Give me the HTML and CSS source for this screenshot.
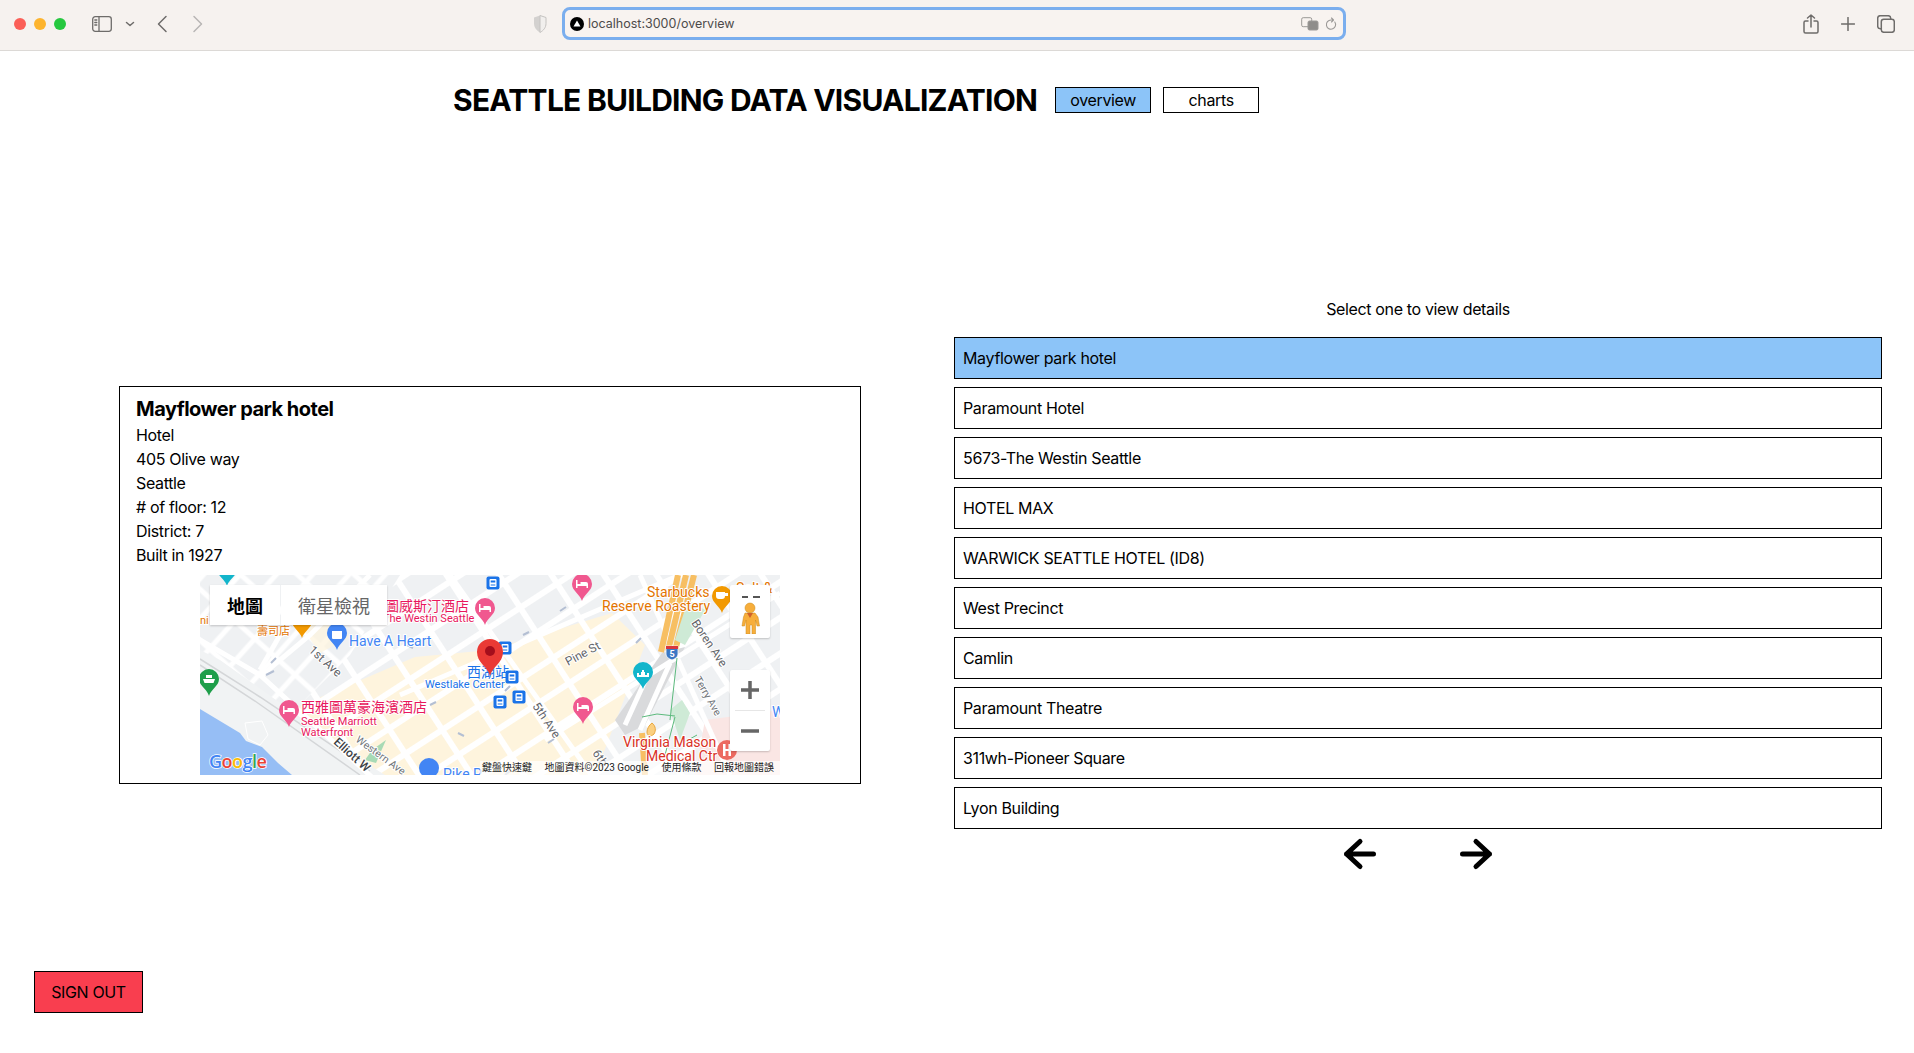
FILE: index.html
```html
<!DOCTYPE html>
<html lang="en">
  <head>
    <meta charset="UTF-8" />
    <title>Seattle Building Data Visualization</title>
    <meta name="viewport" content="width=device-width, initial-scale=1.0" />
    <link rel="stylesheet" href="styles.css">
  </head>
  <body>
    <div class="toolbar">
      <div class="lights">
        <span class="light light-red"></span>
        <span class="light light-yellow"></span>
        <span class="light light-green"></span>
      </div>
      <svg class="icon sidebar-icon" viewBox="0 0 20 16">
        <rect x="0.7" y="0.7" width="18.6" height="14.6" rx="2.5" />
        <path d="M7 1v14M2.8 4h2M2.8 6.5h2M2.8 9h2" />
      </svg>
      <svg class="icon chevron-icon" viewBox="0 0 10 6"><path d="M1.5 1.5 5 4.5l3.5-3" /></svg>
      <svg class="icon back-icon" viewBox="0 0 12 18"><path d="M10 1.5 2.5 9l7.5 7.5" /></svg>
      <svg class="icon forward-icon" viewBox="0 0 12 18"><path d="M2 1.5 9.5 9 2 16.500" /></svg>
      <svg class="shield-icon" viewBox="0 0 14 18">
        <path class="shield-left" d="M7 0.5 1 2.500v6c0 4 2.500 7 6 9z" />
        <path class="shield-right" d="M7 0.5l6 2v6c0 4-2.500 7-6 9z" />
      </svg>
      <div class="address-bar">
        <svg class="site-icon" viewBox="0 0 14 14">
          <circle cx="7" cy="7" r="7" />
          <path d="M7 3.500 10.500 9.500h-7z" />
        </svg>
        <span class="address-text">localhost:3000/overview</span>
        <svg class="translate-icon" viewBox="0 0 18 14">
          <rect x="0.7" y="0.7" width="10" height="9" rx="1.500" />
          <rect class="translate-fill" x="7" y="4" width="10" height="9" rx="1.500" />
        </svg>
        <svg class="icon reload-icon" viewBox="0 0 12 14"><path d="M9.800 5A4.600 4.600 0 1 1 6 3h2M6.500 1 8.500 3 6.500 5" /></svg>
      </div>
      <div class="toolbar-right">
        <svg class="icon share-icon" viewBox="0 0 16 20"><path d="M5 7H2.500A1.500 1.500 0 0 0 1 8.500v9A1.500 1.500 0 0 0 2.500 19h11a1.500 1.500 0 0 0 1.500-1.500v-9A1.500 1.500 0 0 0 13.500 7H11M8 13V1M4.500 4 8 1l3.500 3" /></svg>
        <svg class="icon plus-icon" viewBox="0 0 14 14"><path d="M7 0.500v13M0.500 7h13" /></svg>
        <svg class="icon tabs-icon" viewBox="0 0 18 18">
          <rect x="0.700" y="0.700" width="13" height="13" rx="2.500" />
          <rect class="tabs-front" x="4.300" y="4.300" width="13" height="13" rx="2.500" />
        </svg>
      </div>
    </div>

    <header class="site-header">
      <h1>SEATTLE BUILDING DATA VISUALIZATION</h1>
      <button class="nav-button nav-active">overview</button>
      <button class="nav-button">charts</button>
    </header>

    <main class="overview">
      <section class="detail-panel">
        <div class="detail-card">
          <h2>Mayflower park hotel</h2>
          <p>Hotel</p>
          <p>405 Olive way</p>
          <p>Seattle</p>
          <p># of floor: 12</p>
          <p>District: 7</p>
          <p>Built in 1927</p>
          <div class="map">
            <svg class="map-canvas" viewBox="0 0 580 200">
              <defs>
                <pattern id="blocksGray" width="44" height="30" patternUnits="userSpaceOnUse" patternTransform="rotate(-33 290 100)">
                  <rect width="44" height="30" fill="#ffffff" />
                  <rect x="3" y="3" width="38" height="24" fill="#eff1f3" />
                </pattern>
                <pattern id="blocksTan" width="44" height="30" patternUnits="userSpaceOnUse" patternTransform="rotate(-33 290 100)">
                  <rect width="44" height="30" fill="#ffffff" />
                  <rect x="3" y="3" width="38" height="24" fill="#fef4dd" />
                </pattern>
                <pattern id="blocksWest" width="27" height="38" patternUnits="userSpaceOnUse" patternTransform="rotate(42 120 90)">
                  <rect width="27" height="38" fill="#ffffff" />
                  <rect x="2.500" y="2.500" width="22" height="33" fill="#eff1f3" />
                </pattern>
                <path id="pin" d="M0 0C-2-7-10-10-10-17A10 10 0 1 1 10-17C10-10 2-7 0 0Z" />
                <path id="bed" d="M-6-13v-8h1.500v4h3v-2h5.500a2 2 0 0 1 2 2v4H4.500v-2h-9v2z" fill="#fff" />
                <g id="stop">
                  <rect x="-6.500" y="-6.500" width="13" height="13" rx="2" fill="#1a73e8" />
                  <rect x="-3.500" y="-4" width="7" height="8" rx="1" fill="#fff" />
                  <rect x="-2.300" y="-2.500" width="4.600" height="2" fill="#1a73e8" />
                  <rect x="-2.300" y="1.500" width="4.600" height="1" fill="#1a73e8" />
                </g>
              </defs>

              <rect width="580" height="200" fill="url(#blocksGray)" />
              <polygon points="0,0 200,0 150,80 95,135 130,200 0,200" fill="url(#blocksWest)" />
              <polygon points="95,133 215,82 290,75 412,38 445,70 395,200 160,200" fill="url(#blocksTan)" />
              <polygon points="86,30 115,18 150,62 120,78" fill="#fef4dd" opacity="0.7" />

              <polygon points="0,75 20,85 150,178 185,200 0,200" fill="#f1f3f4" />
              <path class="rail" d="M0 84 60 122 170 196" />
              <path class="rail" d="M0 90 55 126 160 200" />
              <path class="road-wide" d="M-5 62 60 100 175 205" />
              <path class="road-wide" d="M62 100 110 60 170 0" />
              <path class="road-wide" d="M60 95 80 60" />

              <path class="water" d="M0 134 40 158 46 166 62 172 78 188 92 200H0Z" />
              <path class="shore" d="M45 148 62 146 68 160 60 170 48 164Z" />

              <polygon points="505,145 580,135 580,200 495,200" fill="#fae6e4" />
              <polygon points="462,78 485,72 445,150 425,160 415,145" fill="#d9dadc" />
              <path class="road-wide" d="M450 95 425 150M470 88 440 155" />
              <path class="road-wide" d="M345 165 580 18" />
              <path class="road-wide" d="M200 120 480 0" />
              <path class="road-wide" d="M250 0 395 205" />
              <path class="road-wide" d="M440 0 530 200" />

              <path class="highway" d="M478 0 461 77" />
              <path class="highway" d="M486 0 468 76" />
              <path class="highway" d="M494 0 475 76" />
              <path class="highway" d="M445 200 442 158" />
              <path class="highway-thin" d="M452 148c4 3 4 8 2 11-3 3-7 2-7-2 0-3 2-7 5-9z" />
              <polygon points="488,25 505,35 485,70 475,65" fill="#ceead6" />
              <polygon points="490,138 480,165 470,135 482,125" fill="#ceead6" />
              <polygon points="172,175 186,165 176,188 165,185" fill="#a8dab5" />
              <path class="path-green" d="M477 83 470 145M442 142l15-3 18 2M475 142l-10 38M497 160l-18 10" />

              <path class="arrow" d="M66 100l8-4M71 88l5-5M126 30l5 3M207 70l6 3M143 160l-5 2M230 130l6-3M305 116l5-5M323 60l6-3M360 36l6-4M258 158l6 3M348 168l6-4M305 200l5-4M200 36l-3-6M436 68l5-5" />

              <text class="label label-road" transform="translate(108 76) rotate(42)">1st Ave</text>
              <text class="label label-road" transform="translate(368 91) rotate(-28)">Pine St</text>
              <text class="label label-road" transform="translate(332 131) rotate(56)">5th Ave</text>
              <text class="label label-road" transform="translate(491 48) rotate(56)">Boren Ave</text>
              <text class="label label-road-small" transform="translate(494 104) rotate(60)">Terry Ave</text>
              <text class="label label-road-dark" transform="translate(133 168) rotate(42)">Elliott W</text>
              <text class="label label-road-small" transform="translate(155 166) rotate(36)">Western Ave</text>
              <text class="label label-road" transform="translate(392 178) rotate(56)">6th</text>

              <text class="label label-hotel-cjk" x="185" y="36">圖威斯汀酒店</text>
              <text class="label label-hotel" x="183" y="47">The Westin Seattle</text>
              <text class="label label-hotel-cjk" x="101" y="137">西雅圖萬豪海濱酒店</text>
              <text class="label label-hotel" x="101" y="150">Seattle Marriott</text>
              <text class="label label-hotel" x="101" y="161">Waterfront</text>
              <text class="label label-shop" x="149" y="71">Have A Heart</text>
              <text class="label label-food-small" x="57" y="60">壽司店</text>
              <text class="label label-food-small" x="0" y="49">ni</text>
              <text class="label label-food" x="447" y="22">Starbucks</text>
              <text class="label label-food" x="402" y="36">Reserve Roastery</text>
              <text class="label label-food" x="536" y="18">Salt &amp;</text>
              <text class="label label-medical" x="423" y="172">Virginia Mason</text>
              <text class="label label-medical" x="446" y="186">Medical Ctr</text>
              <text class="label label-transit-cjk" x="267" y="102">西湖站</text>
              <text class="label label-transit" x="225" y="113">Westlake Center</text>
              <text class="label label-shop" x="243" y="204">Pike P</text>
              <text class="label label-shop" x="572" y="142">W</text>

              <use href="#pin" class="pin-teal" transform="translate(27 11)" />
              <use href="#pin" class="pin-orange" transform="translate(102 63)" />
              <use href="#pin" class="pin-blue" transform="translate(137 75)" />
              <path class="glyph-white" d="M132 56h10v7a1 1 0 0 1-1 1h-8a1 1 0 0 1-1-1z" />
              <use href="#pin" class="pin-green" transform="translate(9 121)" />
              <path class="glyph-white" d="M3 104h12l-1.500 4h-9zM6 100h6v3H6z" />
              <use href="#pin" class="pin-pink" transform="translate(89 152)" />
              <use href="#bed" transform="translate(89 152)" />
              <use href="#pin" class="pin-pink" transform="translate(285 50)" />
              <use href="#bed" transform="translate(285 50)" />
              <use href="#pin" class="pin-pink" transform="translate(382 26)" />
              <use href="#bed" transform="translate(382 26)" />
              <use href="#pin" class="pin-pink" transform="translate(383 149)" />
              <use href="#bed" transform="translate(383 149)" />
              <use href="#pin" class="pin-orange" transform="translate(522 38)" />
              <path class="glyph-white" d="M516 17h9v4a3 3 0 0 1-3 3h-3a3 3 0 0 1-3-3zM525 18h3v3h-3z" />
              <use href="#pin" class="pin-teal" transform="translate(443 114)" />
              <path class="glyph-white" d="M437 102h12v-4h-2v2h-2v-3h-1v-2h-2v2h-1v3h-2v-2h-2z" />
              <circle class="pin-cart" cx="229" cy="193" r="10" />
              <circle class="pin-hospital" cx="527" cy="175" r="10" />
              <path class="glyph-white" d="M523 169h2.500v5h3v-5h2.500v12h-2.500v-5h-3v5H523z" />

              <use href="#stop" transform="translate(293 8)" />
              <use href="#stop" transform="translate(305 73)" />
              <use href="#stop" transform="translate(312 102)" />
              <use href="#stop" transform="translate(319 122)" />
              <use href="#stop" transform="translate(300 127)" />

              <path class="shield-five" d="M466 71h12v8c0 3-3 5-6 6-3-1-6-3-6-6z" />
              <path class="shield-five-top" d="M466 71h12v3h-12z" />
              <text class="label-five" x="472" y="82">5</text>

              <path class="pin-main" d="M290 101C288 92 277 88 277 77A13 13 0 1 1 303 77C303 88 292 92 290 101Z" />
              <circle class="pin-main-dot" cx="290" cy="76" r="5" />

              <text class="google-logo" x="9" y="193"><tspan fill="#4285f4">G</tspan><tspan fill="#ea4335">o</tspan><tspan fill="#fbbc05">o</tspan><tspan fill="#4285f4">g</tspan><tspan fill="#34a853">l</tspan><tspan fill="#ea4335">e</tspan></text>
            </svg>

            <div class="map-type">
              <span class="map-type-item map-type-active">地圖</span>
              <span class="map-type-item">衛星檢視</span>
            </div>

            <div class="pegman-box">
              <span class="pegman-dash"></span>
              <svg class="pegman" viewBox="0 0 22 32">
                <circle cx="11" cy="6" r="5" />
                <path d="M6 11h10l3 4 1.500 9h-2.500l-1.500-6v14h-3.500v-9h-2v9H7V18l-1.500 6H3l1.500-9z" />
                <path class="pegman-collar" d="M8 11h6l-3 5z" />
              </svg>
            </div>

            <div class="zoom-box">
              <button class="zoom-button">
                <svg viewBox="0 0 18 18"><path d="M9 0v18M0 9h18" /></svg>
              </button>
              <span class="zoom-rule"></span>
              <button class="zoom-button">
                <svg viewBox="0 0 18 18"><path d="M0 9h18" /></svg>
              </button>
            </div>

            <div class="map-footer">
              <span>鍵盤快速鍵</span>
              <span>地圖資料©2023 Google</span>
              <span>使用條款</span>
              <span>回報地圖錯誤</span>
            </div>
          </div>
        </div>
      </section>

      <section class="building-panel">
        <p class="panel-hint">Select one to view details</p>
        <ul class="building-list">
          <li class="building-item building-active">Mayflower park hotel</li>
          <li class="building-item">Paramount Hotel</li>
          <li class="building-item">5673-The Westin Seattle</li>
          <li class="building-item">HOTEL MAX</li>
          <li class="building-item">WARWICK SEATTLE HOTEL (ID8)</li>
          <li class="building-item">West Precinct</li>
          <li class="building-item">Camlin</li>
          <li class="building-item">Paramount Theatre</li>
          <li class="building-item">311wh-Pioneer Square</li>
          <li class="building-item">Lyon Building</li>
        </ul>
        <div class="pager">
          <svg class="pager-arrow" viewBox="0 0 36 36"><path d="M31.500 18H4.500M18 5.500 4.500 18 18 30.500" /></svg>
          <svg class="pager-arrow" viewBox="0 0 36 36"><path d="M4.500 18h27M18 5.500 31.500 18 18 30.500" /></svg>
        </div>
      </section>
    </main>

    <button class="sign-out">SIGN OUT</button>
  </body>
</html>
```

FILE: styles.css
```css
* {
  box-sizing: border-box;
}

body {
  font-family: Inter, "Liberation Sans", sans-serif;
  font-size: 16px;
  letter-spacing: -0.35px;
  color: #000;
  background-color: #fff;
  margin: 0;
  padding: 0;
  height: 1053px;
  overflow: hidden;
}

/* browser toolbar */
.toolbar {
  height: 51px;
  background-color: #f6f2ef;
  border-bottom: 1px solid #dcd9d6;
  display: flex;
  align-items: center;
  padding-left: 14px;
}

.lights {
  display: flex;
  gap: 8px;
  margin-right: 26px;
  margin-top: -3px;
}

.light {
  width: 12px;
  height: 12px;
  border-radius: 50%;
}

.light-red {
  background-color: #fb5f57;
}

.light-yellow {
  background-color: #fdb42e;
}

.light-green {
  background-color: #26c83f;
}

.icon {
  fill: none;
  stroke: #6e6c6a;
  stroke-width: 1.500;
  stroke-linecap: round;
  stroke-linejoin: round;
  margin-top: -3px;
}

.sidebar-icon {
  width: 20px;
  height: 16px;
  margin-right: 13px;
  stroke-width: 1.300;
}

.chevron-icon {
  width: 10px;
  height: 6px;
  margin-right: 21px;
}

.back-icon {
  width: 12px;
  height: 18px;
  margin-right: 24px;
}

.forward-icon {
  width: 12px;
  height: 18px;
  stroke: #b8b6b4;
  margin-right: 329px;
}

.shield-icon {
  width: 14px;
  height: 18px;
  margin-right: 15px;
  margin-top: -3px;
}

.shield-left {
  fill: #d3d1cf;
}

.shield-right {
  fill: #f1efed;
  stroke: #c4c2c0;
}

.address-bar {
  width: 784px;
  height: 33px;
  margin-top: -3px;
  border: 3px solid #7aaeee;
  border-radius: 8px;
  background-color: #f8f3f0;
  display: flex;
  align-items: center;
  padding: 0 6px 0 5px;
}

.site-icon {
  width: 14px;
  height: 14px;
  margin-right: 4px;
}

.site-icon path {
  fill: #fff;
}

.address-text {
  font-size: 12.500px;
  letter-spacing: 0;
  color: #4d4b4a;
  flex: 1;
}

.translate-icon {
  width: 18px;
  height: 14px;
  margin-right: 6px;
  fill: none;
  stroke: #9b9997;
}

.translate-fill {
  fill: #8f8d8b;
}

.reload-icon {
  width: 12px;
  height: 14px;
  margin-top: 0;
  stroke: #9b9997;
  stroke-width: 1.100;
}

.toolbar-right {
  display: flex;
  align-items: center;
  gap: 22px;
  margin-left: 457px;
}

.share-icon {
  width: 16px;
  height: 20px;
}

.plus-icon {
  width: 14px;
  height: 14px;
}

.tabs-icon {
  width: 18px;
  height: 18px;
}

.tabs-front {
  fill: #f6f2ef;
}

/* page header */
.site-header {
  display: flex;
  align-items: center;
  padding-left: 453px;
  height: 98px;
}

h1 {
  font-size: 30px;
  line-height: 36px;
  font-weight: 700;
  margin: 0 18px 0 0;
  letter-spacing: -0.75px;
  white-space: nowrap;
}

.nav-button {
  width: 96px;
  height: 26px;
  margin-right: 12px;
  border: 1px solid #000;
  background-color: #fff;
  font-family: inherit;
  font-size: 16px;
  letter-spacing: inherit;
  line-height: 24px;
  color: #000;
  padding: 0;
}

.nav-active {
  background-color: #8cc4f8;
}

/* main area */
.overview {
  display: flex;
  align-items: center;
  padding: 148px 32px 0 119px;
}

.detail-panel {
  width: 835px;
}

.detail-card {
  width: 742px;
  border: 1px solid #000;
  padding: 8px 16px;
}

.detail-card h2 {
  font-size: 20px;
  line-height: 28px;
  font-weight: 700;
  letter-spacing: -0.5px;
  margin: 0;
}

.detail-card p {
  margin: 0;
  line-height: 24px;
}

.map {
  position: relative;
  width: 580px;
  height: 200px;
  margin: 8px auto 0;
  overflow: hidden;
  letter-spacing: 0;
}

.map-canvas {
  display: block;
  width: 580px;
  height: 200px;
  font-family: Roboto, "Noto Sans CJK TC", sans-serif;
}

.road-wide {
  fill: none;
  stroke: #fff;
  stroke-width: 5;
}

.rail {
  fill: none;
  stroke: #d4d6d8;
  stroke-width: 1.500;
}

.water {
  fill: #96bef5;
}

.shore {
  fill: #f1f3f4;
  stroke: #fff;
}

.highway {
  fill: none;
  stroke: #f7bf63;
  stroke-width: 6;
}

.highway-thin {
  fill: #fbcf7f;
  stroke: #e8a63e;
}

.path-green {
  fill: none;
  stroke: #5cba7d;
  stroke-width: 1;
}

.arrow {
  fill: none;
  stroke: #b4bfd3;
  stroke-width: 2;
}

.label {
  paint-order: stroke;
  stroke: #fff;
  stroke-width: 2px;
  stroke-linejoin: round;
}

.label-road {
  font-size: 12px;
  fill: #5f6368;
}

.label-road-small {
  font-size: 10.500px;
  fill: #70757a;
}

.label-road-dark {
  font-size: 12px;
  font-weight: 500;
  fill: #3c4043;
}

.label-hotel-cjk {
  font-size: 14px;
  fill: #e8175d;
}

.label-hotel {
  font-size: 11px;
  fill: #e8175d;
}

.label-shop {
  font-size: 14px;
  fill: #4285f4;
}

.label-food {
  font-size: 14px;
  fill: #e37400;
}

.label-food-small {
  font-size: 11px;
  fill: #e37400;
}

.label-medical {
  font-size: 14px;
  fill: #d93025;
}

.label-transit-cjk {
  font-size: 14px;
  fill: #1a73e8;
}

.label-transit {
  font-size: 11px;
  fill: #1a73e8;
}

.pin-teal {
  fill: #12b5cb;
}

.pin-orange {
  fill: #f29900;
}

.pin-blue {
  fill: #4285f4;
}

.pin-green {
  fill: #1e9e4a;
}

.pin-pink {
  fill: #f0588f;
}

.pin-cart {
  fill: #4285f4;
}

.pin-hospital {
  fill: #ec6a60;
}

.glyph-white {
  fill: #fff;
}

.shield-five {
  fill: #3b78c4;
  stroke: #fff;
  stroke-width: 0.800;
}

.shield-five-top {
  fill: #d9363e;
}

.label-five {
  font-size: 9px;
  font-weight: 700;
  fill: #fff;
  text-anchor: middle;
}

.pin-main {
  fill: #ea3a35;
}

.pin-main-dot {
  fill: #a50e1c;
}

.google-logo {
  font-family: "Open Sans", sans-serif;
  font-size: 18px;
  font-weight: 600;
  letter-spacing: -0.5px;
  paint-order: stroke;
  stroke: #fff;
  stroke-width: 1.500px;
}

.map-type {
  position: absolute;
  top: 10px;
  left: 10px;
  display: flex;
  gap: 1px;
  height: 40px;
  font-family: Roboto, "Noto Sans CJK TC", sans-serif;
  font-size: 18px;
  box-shadow: 0 1px 2px rgba(0, 0, 0, 0.2);
}

.map-type-item {
  background-color: #fff;
  color: #666;
  line-height: 43px;
  padding: 0 17px;
}

.map-type-active {
  color: #000;
  font-weight: 700;
}

.pegman-box {
  position: absolute;
  top: 10px;
  left: 530px;
  width: 40px;
  height: 53px;
  background-color: #fff;
  border-radius: 2px;
  box-shadow: 0 1px 2px rgba(0, 0, 0, 0.2);
}

.pegman-dash {
  position: absolute;
  top: 11px;
  left: 12px;
  width: 18px;
  height: 2px;
  background: linear-gradient(to right, #555 6.500px, transparent 6.500px, transparent 11px, #555 11px);
}

.pegman {
  position: absolute;
  top: 17px;
  left: 9px;
  width: 22px;
  height: 32px;
  fill: #f7ae3b;
  stroke: #c98a1c;
  stroke-width: 0.500;
}

.pegman-collar {
  fill: #d0622b;
  stroke: none;
}

.zoom-box {
  position: absolute;
  top: 95px;
  left: 530px;
  width: 40px;
  height: 81px;
  background-color: #fff;
  border-radius: 2px;
  box-shadow: 0 1px 2px rgba(0, 0, 0, 0.2);
  display: flex;
  flex-direction: column;
  align-items: center;
}

.zoom-button {
  width: 40px;
  height: 40px;
  border: none;
  background: none;
  padding: 11px;
}

.zoom-button svg {
  display: block;
  width: 18px;
  height: 18px;
  stroke: #666;
  stroke-width: 3.500;
  fill: none;
}

.zoom-rule {
  width: 30px;
  height: 1px;
  background-color: #e6e6e6;
}

.map-footer {
  position: absolute;
  right: 0;
  bottom: 0;
  height: 14px;
  width: 300px;
  padding: 0 6px 0 2px;
  display: flex;
  justify-content: space-between;
  background-color: rgba(255, 255, 255, 0.7);
  font-family: Roboto, "Noto Sans CJK TC", sans-serif;
  font-size: 10px;
  line-height: 14px;
  color: #222;
  white-space: nowrap;
}

/* building list */
.building-panel {
  width: 928px;
}

.panel-hint {
  margin: 0 0 16px;
  line-height: 24px;
  text-align: center;
}

.building-list {
  list-style: none;
  margin: 0;
  padding: 0;
  display: flex;
  flex-direction: column;
  gap: 8px;
}

.building-item {
  height: 42px;
  border: 1px solid #000;
  padding: 0 8px;
  line-height: 40px;
}

.building-active {
  background-color: #8cc4f8;
}

.pager {
  display: flex;
  justify-content: center;
  gap: 80px;
  margin-top: 7px;
}

.pager-arrow {
  width: 36px;
  height: 36px;
  fill: none;
  stroke: #000;
  stroke-width: 5;
  stroke-linecap: round;
  stroke-linejoin: round;
}

/* sign out */
.sign-out {
  display: block;
  width: 109px;
  height: 42px;
  margin: 99px 0 0 34px;
  border: 1px solid #000;
  background-color: #f93e4f;
  font-family: inherit;
  font-size: 16px;
  letter-spacing: inherit;
  color: #000;
  padding: 0;
}
```
